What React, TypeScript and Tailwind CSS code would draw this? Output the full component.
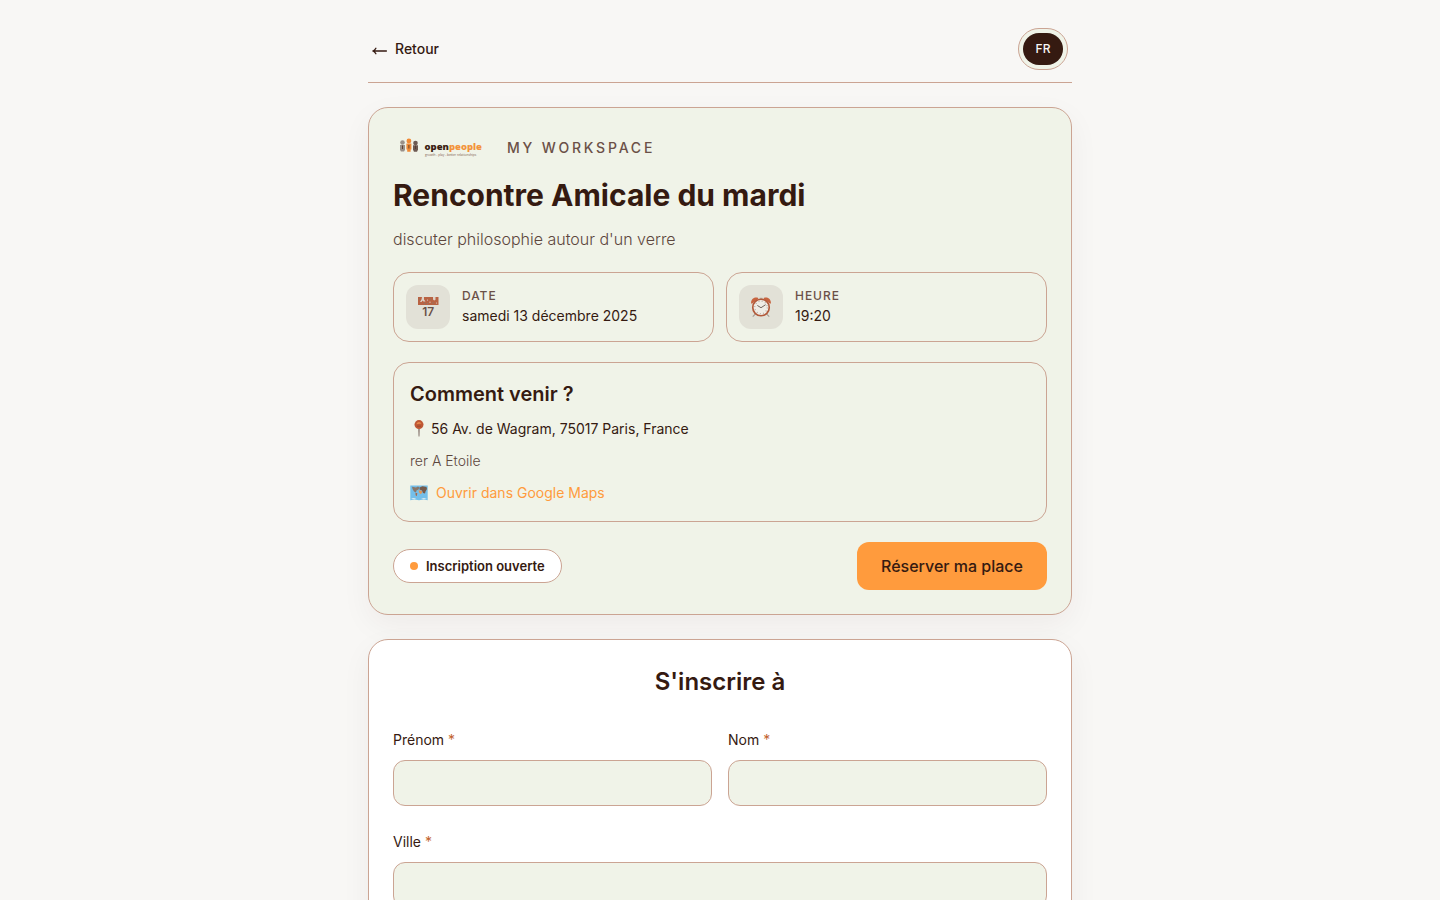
import type { ReactNode } from "react";

function ArrowLeftIcon() {
  return (
    <svg className="h-4 w-4" viewBox="0 0 16 16" fill="none" stroke="currentColor" strokeWidth={1.3} strokeLinecap="round" strokeLinejoin="round">
      <path d="M14.400 10H.900M3.900 7.200C3.100 8.700 2.100 9.600.9 10c1.200.4 2.200 1.300 3 2.800" />
    </svg>
  );
}

function Logo() {
  return (
    <svg className="h-8 w-[98px]" viewBox="0 0 98 32" role="img" aria-label="openpeople">
      <g fill="#9a9089">
        <circle cx="9.500" cy="10.500" r="2.300" />
        <path d="M7 13h5v5.500h-.8V19.500H7.800v-1H7z" />
      </g>
      <g fill="#f08a35">
        <circle cx="15.900" cy="9" r="2.400" />
        <path d="M13.400 11.400h5v6.100h-.8v2.300h-3.400v-2.300h-.8z" />
      </g>
      <g fill="#6d5a52">
        <circle cx="22.500" cy="11" r="2.300" />
        <path d="M20 13.300h5v5.200h-.8v1.200h-3.400v-1.200H20z" />
      </g>
      <path d="M9.500 13.500v3.500M15.900 13v3.500M22.500 13.500v3.500" stroke="#56392d" strokeWidth={0.9} />
      <text x="31.500" y="18" fontFamily="'Open Sans', sans-serif" fontWeight="800" fontSize="9.500" fill="#3a1d12">
        open<tspan fill="#f3933c">people</tspan>
      </text>
      <text x="32" y="24" fontFamily="'Open Sans', sans-serif" fontSize="3.200" fill="#7d5a4c">
        growth - play - better relationships
      </text>
    </svg>
  );
}

function CalendarIcon() {
  return (
    <svg className="h-6 w-6" viewBox="0 0 24 24">
      <path d="M2 2h20.500v8H2z" fill="#b96343" />
      <g fill="#ddd3c8">
        <path d="M6 2h2v2.500l1.500 2H7.500L6.500 5.500 5.500 7H4l1.500-2.500zM17 2h2.500v2.700l-1.300.8-1.200-1z" />
        <circle cx="11.500" cy="5" r=".6" />
        <circle cx="14" cy="7.200" r=".6" />
        <circle cx="20.500" cy="8" r=".6" />
      </g>
      <g fill="#8d7768">
        <circle cx="3.500" cy="4" r=".6" />
        <circle cx="8.500" cy="8.300" r=".8" />
        <circle cx="11.500" cy="8.400" r=".7" />
        <circle cx="14.500" cy="4" r=".6" />
        <circle cx="17" cy="8" r=".7" />
      </g>
      <text x="12.300" y="21" textAnchor="middle" fontFamily="Inter, sans-serif" fontWeight="600" fontSize="12" fill="#6b5047">
        17
      </text>
    </svg>
  );
}

function ClockIcon() {
  return (
    <svg className="h-[22px] w-[22px]" viewBox="0 0 24 24" fill="none">
      <path d="M6 19.500l-3 3M18 19.500l3 3" stroke="#a39a91" strokeWidth={1.200} />
      <path d="M8.500 2C5.500.800 1 3 1.200 7.500c.1 1 1 1 1.500.500l6-4.500c.600-.500.400-1.200-.2-1.500zM15.500 2c3-1.200 7.500 1 7.300 5.500-.1 1-1 1-1.500.500l-6-4.500c-.6-.500-.4-1.200.2-1.500z" fill="#c76440" />
      <path d="M10.500 2.500h3" stroke="#a39a91" strokeWidth={1} />
      <circle cx="12" cy="12.500" r="9" fill="#efece5" stroke="#b2593a" strokeWidth={1.800} />
      <circle cx="12" cy="12.500" r="6.800" stroke="#b5aca2" strokeWidth={1.400} strokeDasharray="1 2.560" />
      <path d="M8 10.300l4 2.500 5-3.300" stroke="#655850" strokeWidth={1} strokeLinejoin="round" />
    </svg>
  );
}

function PinIcon() {
  return (
    <svg className="h-[18px] w-[18px]" viewBox="0 0 18 18">
      <path d="M8.200 9h1.600l-.3 7.500h-1z" fill="#8f8078" />
      <circle cx="9" cy="4.600" r="4.500" fill="#bf5734" />
      <path d="M6.300 4.200a2.700 2.700 0 0 1 5.200-.4c-1.800-.3-3.500 0-5.200.4z" fill="#e78a4c" />
      <path d="M7 6.200h4" stroke="#8f4a31" strokeWidth={0.8} />
    </svg>
  );
}

function MapIcon() {
  return (
    <svg className="h-[18px] w-[18px]" viewBox="0 0 18 18">
      <path d="M.3 1.500h17.400v14.700l-4.200-.7-4.500.7-4.500-.7-4.200.7z" fill="#74bfea" />
      <path d="M2 2.800l4 .7 2-1 1.500 1-1 2-2 1-.5 2L4 7.500 2.500 5z" fill="#8a7668" />
      <path d="M9.500 3.500l3-1.200 4 .7.500 2-1.500 2.500-.5 2-2-.5-1-2.500-2.500-1z" fill="#765a4b" />
      <path d="M8.500 6.300l3.200.4.500 1.600-1.400 2-1.600-1.800z" fill="#e79452" />
      <path d="M5.500 8.800l1.800.5-.5 3-1.200-1z" fill="#a8684b" />
      <path d="M1 15l2-1 3 .6-1 .6zM11 14.800l3-.8 3 1-3 .2z" fill="#dfeef2" />
    </svg>
  );
}

function InfoTile({ icon, label, value }: { icon: ReactNode; label: string; value: string }) {
  return (
    <div className="flex items-center gap-3 rounded-2xl border border-[#cba493] p-3">
      <div className="flex h-11 w-11 shrink-0 items-center justify-center rounded-xl bg-[#e2e1d7]">{icon}</div>
      <div>
        <p className="text-xs leading-[18px] font-medium tracking-[0.08em] text-[#6b5047] uppercase">{label}</p>
        <p className="text-sm leading-[22px]">{value}</p>
      </div>
    </div>
  );
}

function Field({ id, label, className = "" }: { id: string; label: string; className?: string }) {
  return (
    <div className={className}>
      <label htmlFor={id} className="mb-2 block text-sm leading-6">
        {label} <span className="text-[#c2622d]">*</span>
      </label>
      <input
        id={id}
        name={id}
        type="text"
        required
        className="block h-[46px] w-full rounded-xl border border-[#cba493] bg-[#f0f3e8] px-4 text-base outline-none focus:border-[#ff9b3d]"
      />
    </div>
  );
}

export default function App() {
  return (
    <div className="min-h-screen bg-[#f8f7f5] font-['Inter',sans-serif] text-[#351a11]">
      <div className="mx-auto max-w-3xl px-8 pb-12">
        <header className="mb-6 flex items-center justify-between border-b border-[#cba493] px-1 pt-7 pb-3">
          <button type="button" className="flex items-center gap-[7px] text-sm font-medium">
            <ArrowLeftIcon />
            Retour
          </button>
          <div className="rounded-full border border-[#cba493] bg-[#f0f3e8] p-1">
            <button type="button" className="block h-8 w-10 rounded-full bg-[#351a11] text-xs font-medium text-[#f8f7f5]">
              FR
            </button>
          </div>
        </header>

        <main className="flex flex-col gap-6">
          <section className="rounded-[20px] border border-[#cba493] bg-[#f0f3e8] p-6 shadow-[0_10px_30px_rgba(53,26,17,0.05)]">
            <div className="flex items-center gap-4">
              <Logo />
              <span className="text-sm font-medium tracking-[0.2em] text-[#6b5047] uppercase">My Workspace</span>
            </div>
            <h1 className="mt-3 text-[30px] leading-[38px] font-bold">Rencontre Amicale du mardi</h1>
            <p className="mt-3 text-base leading-[26px] font-light text-[#5d463d]">discuter philosophie autour d'un verre</p>

            <div className="mt-5 grid gap-3 sm:grid-cols-2">
              <InfoTile icon={<CalendarIcon />} label="Date" value="samedi 13 décembre 2025" />
              <InfoTile icon={<ClockIcon />} label="Heure" value="19:20" />
            </div>

            <div className="mt-5 flex flex-col gap-2 rounded-2xl border border-[#cba493] p-4">
              <h2 className="text-xl leading-[30px] font-semibold">Comment venir ?</h2>
              <p className="flex items-center gap-[3px] text-sm leading-6">
                <PinIcon />
                56 Av. de Wagram, 75017 Paris, France
              </p>
              <p className="text-sm leading-6 font-light text-[#5d463d]">rer A Etoile</p>
              <a href="#maps" className="flex items-center gap-2 self-start text-sm leading-6 text-[#ff9b3d]">
                <MapIcon />
                Ouvrir dans Google Maps
              </a>
            </div>

            <div className="mt-5 flex flex-wrap items-center justify-between gap-3">
              <span className="flex items-center gap-2 rounded-full border border-[#cba493] bg-white px-4 py-1.5 text-[13px] leading-5 font-semibold">
                <span className="h-2 w-2 rounded-full bg-[#ff9b3d]" />
                Inscription ouverte
              </span>
              <a href="#inscription" className="flex h-12 items-center rounded-xl bg-[#ff9b3d] px-6 text-base font-medium">
                Réserver ma place
              </a>
            </div>
          </section>

          <section
            id="inscription"
            className="rounded-[20px] border border-[#cba493] bg-white p-6 shadow-[0_10px_30px_rgba(53,26,17,0.05)]"
          >
            <h2 className="text-center text-2xl leading-9 font-semibold">S'inscrire à</h2>
            <form className="mt-7 grid gap-x-4 gap-y-6 sm:grid-cols-2">
              <Field id="prenom" label="Prénom" />
              <Field id="nom" label="Nom" />
              <Field id="ville" label="Ville" className="sm:col-span-2" />
            </form>
          </section>
        </main>
      </div>
    </div>
  );
}
